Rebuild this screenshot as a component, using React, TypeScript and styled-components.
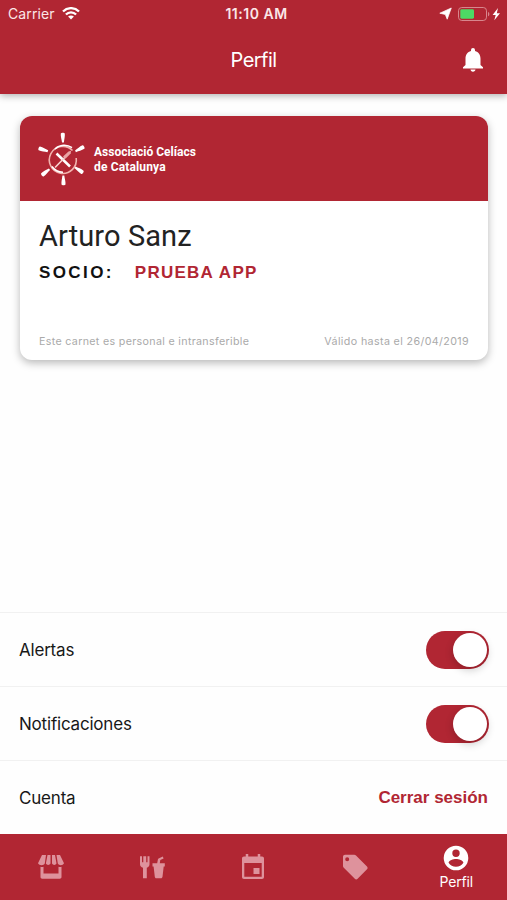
import React from "react";
import styled, { createGlobalStyle } from "styled-components";

const RED = "#b12633";

const GlobalStyle = createGlobalStyle`
  * { box-sizing: border-box; }
  body { margin: 0; background: #fff; }
`;

const Screen = styled.div`
  width: 507px;
  height: 900px;
  display: flex;
  flex-direction: column;
  overflow: hidden;
  background: #fefefe;
  font-family: Inter, "Liberation Sans", sans-serif;
`;

const Header = styled.header`
  height: 94px;
  flex: none;
  background: ${RED};
  color: #fff;
  box-shadow: 0 2px 7px rgba(0, 0, 0, 0.3);
`;

const StatusBar = styled.div`
  height: 27px;
  display: grid;
  grid-template-columns: 1fr auto 1fr;
  align-items: center;
  padding: 0 5px 0 8px;
  color: #fbe6e8;
`;

const StatusGroup = styled.div<{ $end?: boolean }>`
  display: flex;
  align-items: center;
  justify-content: ${(p) => (p.$end ? "flex-end" : "flex-start")};
`;

const Carrier = styled.span`
  font-size: 14px;
  line-height: 16px;
  letter-spacing: 0.1px;
  margin-right: 7px;
`;

const Clock = styled.span`
  font-size: 14px;
  line-height: 17px;
  font-weight: 600;
  letter-spacing: 0.5px;
  padding-left: 3px;
`;

const TitleBar = styled.div`
  height: 67px;
  display: grid;
  grid-template-columns: 1fr auto 1fr;
  align-items: center;
  padding: 0 24px 1px;
`;

const Title = styled.h1`
  grid-column: 2;
  margin: 0;
  font-size: 20px;
  font-weight: 400;
  letter-spacing: -0.55px;
`;

const IconButton = styled.button`
  justify-self: end;
  display: flex;
  padding: 0;
  border: 0;
  background: none;
  color: #fff;
`;

const Main = styled.main`
  flex: 1;
  padding: 22px 19px 0 20px;
`;

const Card = styled.section`
  height: 244px;
  display: flex;
  flex-direction: column;
  border-radius: 12px;
  overflow: hidden;
  background: #fff;
  box-shadow: 0 3px 9px rgba(0, 0, 0, 0.28);
`;

const CardBrand = styled.div`
  height: 85px;
  flex: none;
  display: flex;
  align-items: center;
  gap: 8px;
  padding-left: 18px;
  background: ${RED};
  color: #fff;
`;

const BrandName = styled.div`
  padding-top: 3px;
  font: 700 12px/15px Roboto, sans-serif;
  white-space: pre-line;
`;

const BrandLine = styled.span<{ $wide?: boolean }>`
  display: block;
  letter-spacing: ${(p) => (p.$wide ? "0.15px" : "0")};
`;

const CardBody = styled.div`
  flex: 1;
  display: flex;
  flex-direction: column;
  padding: 17px 19px 11px 19px;
`;

const MemberName = styled.h2`
  margin: 0;
  font: 400 29px/36px Roboto, sans-serif;
  letter-spacing: 0.1px;
  color: #222;
`;

const MemberLine = styled.div`
  display: flex;
  gap: 21px;
  margin-top: 9px;
  font: 700 17px/20px "Liberation Sans", sans-serif;
`;

const MemberText = styled.span<{ $accent?: boolean }>`
  color: ${(p) => (p.$accent ? RED : "#111")};
  letter-spacing: ${(p) => (p.$accent ? "1.25px" : "2.4px")};
`;

const CardFoot = styled.div`
  display: flex;
  justify-content: space-between;
  margin-top: auto;
  font-size: 10.7px;
  line-height: 14px;
  color: #aaa;
`;

const FootText = styled.span<{ $spacing: string }>`
  letter-spacing: ${(p) => p.$spacing};
`;

const Row = styled.div`
  height: 74px;
  flex: none;
  display: flex;
  align-items: center;
  justify-content: space-between;
  padding: 0 18px 0 19px;
  border-top: 1px solid #f1f1f1;
`;

const RowLabel = styled.span`
  font-size: 17px;
  color: #181818;
  letter-spacing: -0.2px;
`;

const Toggle = styled.button`
  width: 63px;
  height: 38px;
  display: flex;
  align-items: center;
  justify-content: flex-end;
  padding: 0 2px;
  border: 0;
  border-radius: 19px;
  background: ${RED};
`;

const Knob = styled.span`
  width: 34px;
  height: 34px;
  border-radius: 50%;
  background: #fff;
  box-shadow: 0 3px 8px rgba(0, 0, 0, 0.2);
`;

const LogoutButton = styled.button`
  padding: 0 1px 0 0;
  border: 0;
  background: none;
  color: ${RED};
  font: 700 17px "Liberation Sans", sans-serif;
  letter-spacing: 0;
`;

const TabBar = styled.nav`
  height: 66px;
  flex: none;
  display: grid;
  grid-template-columns: repeat(5, 1fr);
  background: ${RED};
`;

const Tab = styled.button<{ $active?: boolean }>`
  display: flex;
  flex-direction: column;
  align-items: center;
  justify-content: center;
  gap: 3px;
  padding: ${(p) => (p.$active ? "1px 0 0" : "0")};
  border: 0;
  background: none;
  color: ${(p) => (p.$active ? "#fff" : "#de929c")};
`;

const TabLabel = styled.span`
  font: 400 14px/16px Inter, sans-serif;
  letter-spacing: -0.15px;
`;

const WifiIcon = () => (
  <svg width="18" height="13" viewBox="0 0 18 13" fill="none" stroke="#fff" strokeWidth="2.3">
    <path d="M1 4.500C5.500 0 12.500 0 17 4.500" />
    <path d="M3.900 7.500c2.900-2.900 7.300-2.900 10.200 0" />
    <path d="M6.100 9.600c1.700-1.600 4.100-1.600 5.800 0L9 12.400Z" fill="#fff" stroke="none" />
  </svg>
);

const StatusIcons = () => (
  <svg width="64" height="16" viewBox="0 0 64 16">
    <path d="M13.300 2 9.200 13.200 7.300 8.500 1.800 7.200Z" fill="#fff" stroke="#fff" strokeWidth=".7" strokeLinejoin="round" />
    <rect x="20.500" y="1.500" width="28" height="13" rx="3.300" fill="none" stroke="#d8868d" />
    <path d="M50 6v4.200c1.800-.5 1.800-3.700 0-4.200Z" fill="#d8868d" />
    <rect x="22.300" y="3.300" width="13.700" height="9.400" rx="1.400" fill="#4cd964" />
    <path d="m60 2-5.400 7h3.100l-1.400 5.200L62 7.200h-3.200Z" fill="#fff" />
  </svg>
);

const BellIcon = () => (
  <svg width="20" height="24" viewBox="0 0 20 24" fill="currentColor">
    <path d="M10 23.800c1.400 0 2.500-1 2.500-2.200h-5c0 1.200 1.100 2.200 2.500 2.200Zm7.500-6.800v-6.200c0-3.800-2-6.800-5.500-7.700V2a2 2 0 0 0-4 0v1.100c-3.500.9-5.500 3.900-5.500 7.700V17L0 19.300v1.100h20v-1.100Z" />
  </svg>
);

const RAYS = [
  [24.8, 2, 0],
  [45, 15.3, 63],
  [44, 40, 125],
  [25.5, 52, 180],
  [4.8, 42.5, 233],
  [1.8, 16.5, 290],
];

const SunLogo = () => (
  <svg width="48" height="54" viewBox="0 0 48 54">
    <g fill="#fff">
      {RAYS.map(([x, y, angle]) => (
        <path
          key={angle}
          transform={`translate(${x} ${y}) rotate(${angle})`}
          d="M-2-.5C-1.700-1.600 1.700-1.600 2-.5c.3 3.200-.6 6-.9 9h-1.900c-.3-3-1.500-5.800-1.200-9Z"
        />
      ))}
    </g>
    <path d="M34.500 18.500A13.500 13.500 0 1 0 38.200 26" fill="none" stroke="#f2b3ae" strokeWidth="1.600" />
    <path d="M17 17a13.500 13.500 0 0 1 17-1.300M14 34.500a13.500 13.500 0 0 0 11 5.800" fill="none" stroke="#fff" strokeWidth="1.500" />
    <path d="m18.500 21.500 13.500 13" stroke="#fff" strokeWidth="2.500" />
    <path d="m17.500 35 9-9.300" stroke="#f8d4d1" strokeWidth="1.600" strokeLinecap="round" />
    <path d="m25 24.500 5.500-5 2.500-.7-.3 2.700-5.200 5.300Z" fill="#e9a5a5" />
  </svg>
);

const StoreIcon = () => (
  <svg width="28" height="26" viewBox="0 0 28 26" fill="currentColor">
    <path d="M5 1h4L7.800 9.500C6.600 12 2 11.500 1 9.200ZM10.500 1h3v8.600c-.9 1.800-3.700 1.800-4.600 0ZM15 1h3l1.500 8.600c-.8 1.800-3.600 1.800-4.500 0ZM19.500 1H23l4 8.200c-1 2.300-4.800 2.800-6.200.3Z" />
    <path d="M3.500 12.800c1 .4 2 .4 3 0v6.700h15v-6.700c1 .4 2 .4 3 0V23c0 1-.8 1.700-1.700 1.700H5.200c-1 0-1.700-.7-1.700-1.700Z" />
  </svg>
);

const FoodIcon = () => (
  <svg width="26" height="24" viewBox="0 0 26 24" fill="currentColor">
    <path d="M1 1.200h2v6h1.300v-6h2.900v6h1.300v-6h2v8c0 2-1.200 3-2.700 3.600v10.500H4V12.800C2.300 12.200 1 11.200 1 9.200Z" />
    <path d="M13.500 8.200h4.700l.6-3.300c.2-.9.600-1.300 1.300-1.600l3.700-1.800.8 2-3.300 1.600-.5 3.100h5v3.300h-1.100l-1.200 10.300c-.1.900-.7 1.500-1.600 1.500h-4.600c-.9 0-1.400-.6-1.500-1.500l-1.200-10.300h-1.100Z" />
  </svg>
);

const CalendarIcon = () => (
  <svg width="24" height="26" viewBox="0 0 24 26">
    <path d="M6 0v4M18 0v4" stroke="currentColor" strokeWidth="2.500" />
    <path fill="currentColor" fillRule="evenodd" d="M3 2.500h18c1.200 0 2 .8 2 2V23c0 1.200-.8 2-2 2H3c-1.200 0-2-.8-2-2V4.500c0-1.200.8-2 2-2ZM3.300 9v13.800h17.400V9Z" />
    <path d="M12.500 14h6v6h-6Z" fill="currentColor" />
  </svg>
);

const TagIcon = () => (
  <svg width="26" height="26" viewBox="0 0 26 26" fill="currentColor">
    <path fillRule="evenodd" d="M3 .8h9.200c.7 0 1.300.2 1.800.7l11 11c.8.8.8 2 0 2.800l-9.400 9.500c-.8.8-2 .8-2.800 0l-11-11c-.5-.5-.8-1-.8-1.700V2.800c0-1.100.9-2 2-2Zm2.200 2.400a2 2 0 1 0 0 4 2 2 0 0 0 0-4Z" />
  </svg>
);

const ProfileIcon = () => (
  <svg width="26" height="26" viewBox="0 0 26 26" fill="currentColor">
    <path fillRule="evenodd" d="M13 .7a12.300 12.300 0 1 0 0 24.600A12.300 12.300 0 0 0 13 .7Zm0 3.800a3.700 3.700 0 1 1 0 7.400 3.700 3.700 0 0 1 0-7.400Zm0 17.300c-3.100 0-5.800-1.500-7.400-4 0-2.400 4.900-3.800 7.400-3.800s7.400 1.400 7.400 3.800c-1.600 2.500-4.300 4-7.400 4Z" />
  </svg>
);

export default function App() {
  return (
    <Screen>
      <GlobalStyle />
      <Header>
        <StatusBar>
          <StatusGroup>
            <Carrier>Carrier</Carrier>
            <WifiIcon />
          </StatusGroup>
          <Clock>11:10 AM</Clock>
          <StatusGroup $end>
            <StatusIcons />
          </StatusGroup>
        </StatusBar>
        <TitleBar>
          <Title>Perfil</Title>
          <IconButton aria-label="Avisos">
            <BellIcon />
          </IconButton>
        </TitleBar>
      </Header>
      <Main>
        <Card>
          <CardBrand>
            <SunLogo />
            <BrandName>
              <BrandLine>Associació Celíacs</BrandLine>
              <BrandLine $wide>de Catalunya</BrandLine>
            </BrandName>
          </CardBrand>
          <CardBody>
            <MemberName>Arturo Sanz</MemberName>
            <MemberLine>
              <MemberText>SOCIO:</MemberText>
              <MemberText $accent>PRUEBA APP</MemberText>
            </MemberLine>
            <CardFoot>
              <FootText $spacing="0.32px">Este carnet es personal e intransferible</FootText>
              <FootText $spacing="0.37px">Válido hasta el 26/04/2019</FootText>
            </CardFoot>
          </CardBody>
        </Card>
      </Main>
      <Row>
        <RowLabel>Alertas</RowLabel>
        <Toggle role="switch" aria-checked="true" aria-label="Alertas">
          <Knob />
        </Toggle>
      </Row>
      <Row>
        <RowLabel>Notificaciones</RowLabel>
        <Toggle role="switch" aria-checked="true" aria-label="Notificaciones">
          <Knob />
        </Toggle>
      </Row>
      <Row>
        <RowLabel>Cuenta</RowLabel>
        <LogoutButton>Cerrar sesión</LogoutButton>
      </Row>
      <TabBar>
        <Tab aria-label="Tiendas"><StoreIcon /></Tab>
        <Tab aria-label="Restaurantes"><FoodIcon /></Tab>
        <Tab aria-label="Agenda"><CalendarIcon /></Tab>
        <Tab aria-label="Ofertas"><TagIcon /></Tab>
        <Tab $active>
          <ProfileIcon />
          <TabLabel>Perfil</TabLabel>
        </Tab>
      </TabBar>
    </Screen>
  );
}
